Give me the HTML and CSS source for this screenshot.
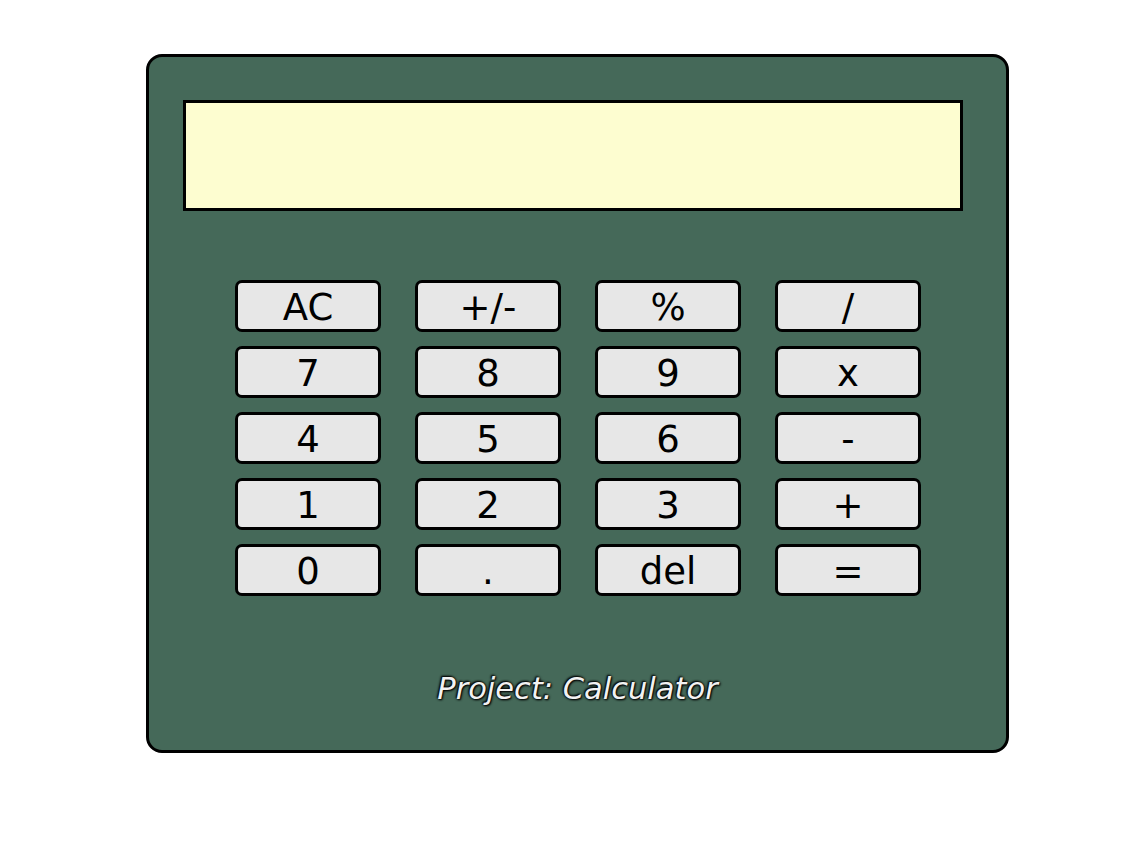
FILE: index.html
```html
<!DOCTYPE html>
<html>
<head>
<meta charset="utf-8">
<link rel="stylesheet" href="styles.css">
</head>
<body>
<div class="calc">
  <div class="display"></div>
  <div class="keys">
    <button class="key">AC</button>
    <button class="key">+/-</button>
    <button class="key">%</button>
    <button class="key">/</button>
    <button class="key">7</button>
    <button class="key">8</button>
    <button class="key">9</button>
    <button class="key">x</button>
    <button class="key">4</button>
    <button class="key">5</button>
    <button class="key">6</button>
    <button class="key">-</button>
    <button class="key">1</button>
    <button class="key">2</button>
    <button class="key">3</button>
    <button class="key">+</button>
    <button class="key">0</button>
    <button class="key">.</button>
    <button class="key">del</button>
    <button class="key">=</button>
  </div>
  <div class="title">Project: Calculator</div>
</div>
</body>
</html>
```
FILE: styles.css
```css
html, body {
  margin: 0;
  padding: 0;
  background: #ffffff;
}
body {
  padding-top: 54px;
  font-family: "DejaVu Sans", "Open Sans", sans-serif;
}
.calc {
  box-sizing: border-box;
  width: 863px;
  height: 699px;
  margin-left: 146px;
  background: #456959;
  border: 3px solid #000;
  border-radius: 16px;
  padding: 43px 0 0 34px;
  display: flex;
  flex-direction: column;
}
.display {
  box-sizing: border-box;
  width: 780px;
  height: 111px;
  background: #fdfdd0;
  border: 3px solid #000;
}
.keys {
  display: grid;
  grid-template-columns: repeat(4, 146px);
  grid-auto-rows: 52px;
  column-gap: 34px;
  row-gap: 14px;
  margin: 69px 0 0 52px;
}
.key {
  box-sizing: border-box;
  background: #e7e7e7;
  border: 3px solid #000;
  border-radius: 7px;
  font-family: "DejaVu Sans", "Open Sans", sans-serif;
  font-size: 37px;
  color: #000;
  padding: 2px 0 0;
  line-height: 1;
}
.title {
  margin: 75px 0 0 -34px;
  text-align: center;
  font-style: italic;
  font-size: 30.5px;
  color: #f2f2f2;
  text-shadow: 1px 1px 2px #000, -1px -1px 2px #000, 0 0 3px #000;
}
```
